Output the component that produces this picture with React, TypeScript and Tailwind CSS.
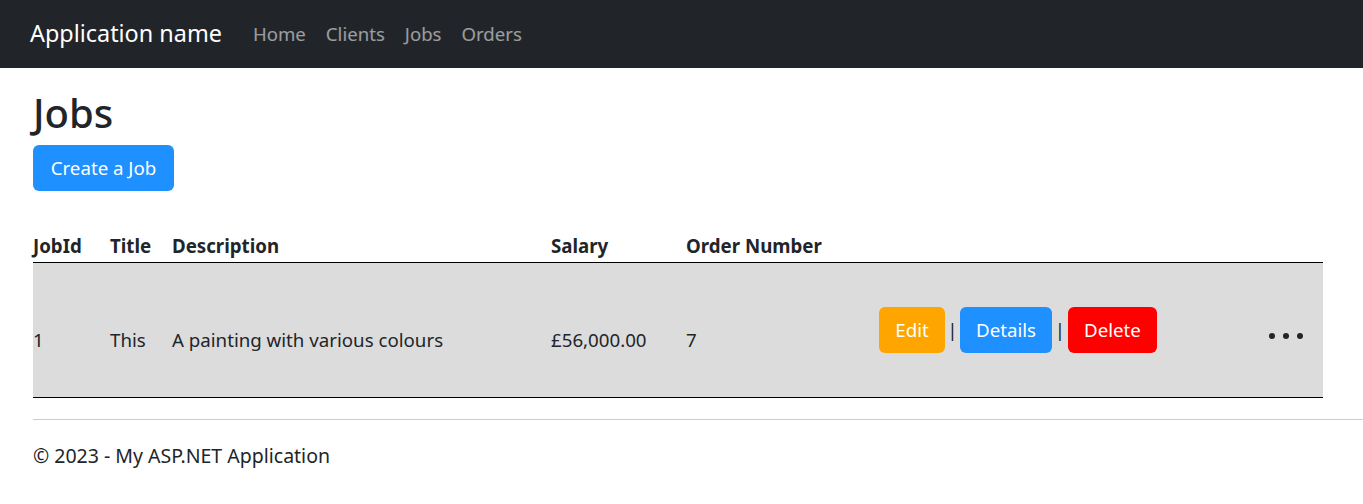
import React from 'react';

const jobs = [
  { id: 1, title: 'This', description: 'A painting with various colours', salary: '£56,000.00', order: 7 },
];

export default function App() {
  return (
    <div className="min-h-[504px] bg-white text-[#212529] font-['Noto_Sans',sans-serif] text-[18.7px]">
      <nav className="h-[68px] bg-[#212529] flex items-center pl-[30px]">
        <span className="text-white text-[23.4px] mr-[31px]">Application name</span>
        <div className="flex gap-[20px] text-[18.6px] text-white/55">
          <a>Home</a>
          <a>Clients</a>
          <a>Jobs</a>
          <a>Orders</a>
        </div>
      </nav>

      <main className="pl-[33px] pr-[40px]">
        <h1 className="text-[40px] font-medium leading-none mt-[25px] mb-[12px]">Jobs</h1>
        <button className="h-[46px] w-[141px] rounded-[6px] bg-[#1e90ff] text-white">
          Create a Job
        </button>

        <table className="mt-[41px] w-[1290px] table-fixed border-collapse">
          <colgroup>
            <col className="w-[77px]" />
            <col className="w-[62px]" />
            <col className="w-[379px]" />
            <col className="w-[135px]" />
            <col className="w-[193px]" />
            <col />
            <col className="w-[74px]" />
          </colgroup>
          <thead>
            <tr className="border-b border-black">
              <th className="text-left font-bold pb-[2px]">JobId</th>
              <th className="text-left font-bold pb-[2px]">Title</th>
              <th className="text-left font-bold pb-[2px]">Description</th>
              <th className="text-left font-bold pb-[2px]">Salary</th>
              <th className="text-left font-bold pb-[2px]">Order Number</th>
              <th />
              <th />
            </tr>
          </thead>
          <tbody>
            {jobs.map((job) => (
              <tr key={job.id} className="bg-[#dcdcdc] h-[135px] border-b border-black">
                <td className="pt-[20px]">{job.id}</td>
                <td className="pt-[20px]">{job.title}</td>
                <td className="pt-[20px]">{job.description}</td>
                <td className="pt-[20px]">{job.salary}</td>
                <td className="pt-[20px]">{job.order}</td>
                <td>
                  <div className="flex items-center">
                    <button className="h-[46px] w-[66px] rounded-[6px] bg-[#ffa500] text-white">Edit</button>
                    <span className="w-[15px] text-center">|</span>
                    <button className="h-[46px] w-[92px] rounded-[6px] bg-[#1e90ff] text-white">Details</button>
                    <span className="w-[16px] text-center">|</span>
                    <button className="h-[46px] w-[89px] rounded-[6px] bg-[#ff0000] text-white">Delete</button>
                  </div>
                </td>
                <td>
                  <div className="flex gap-[8px] pl-[20px] pt-[12px]">
                    <span className="w-[6px] h-[6px] rounded-full bg-[#212529]" />
                    <span className="w-[6px] h-[6px] rounded-full bg-[#212529]" />
                    <span className="w-[6px] h-[6px] rounded-full bg-[#212529]" />
                  </div>
                </td>
              </tr>
            ))}
          </tbody>
        </table>
      </main>

      <footer className="ml-[33px] mt-[21px] border-t border-[#cccccc] pt-[21px]">
        <p className="text-[19.5px]">© 2023 - My ASP.NET Application</p>
      </footer>
    </div>
  );
}
